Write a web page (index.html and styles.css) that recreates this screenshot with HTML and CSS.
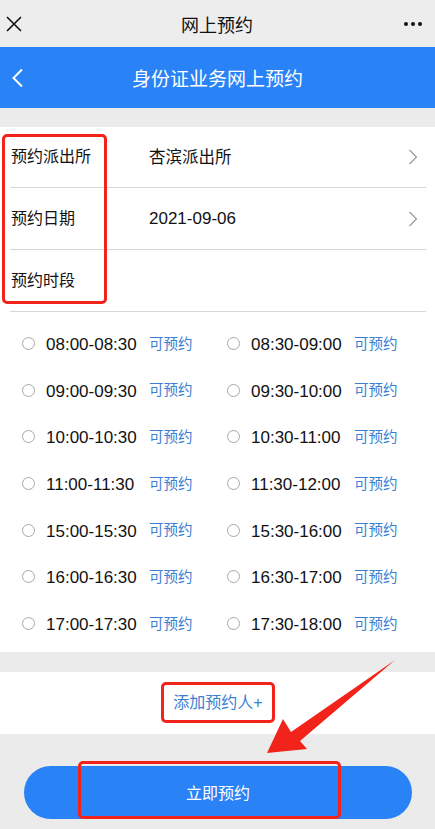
FILE: index.html
```html
<!DOCTYPE html>
<html lang="zh-CN">
<head>
    <meta charset="UTF-8">
    <meta name="viewport" content="width=device-width, initial-scale=1.0">
    <title>网上预约</title>
    <link rel="stylesheet" href="styles.css">
</head>
<body>
    <div class="topbar">
        <svg class="close" width="16" height="16" viewBox="0 0 16 16">
            <path d="M1 1L15 15M15 1L1 15" stroke="#111" stroke-width="1.6" fill="none"/>
        </svg>
        <span class="topbar-title">网上预约</span>
        <span class="dots"><i></i><i></i><i></i></span>
    </div>

    <header class="header">
        <svg class="back" width="13" height="20" viewBox="0 0 13 20">
            <path d="M11 1.5L2.5 10L11 18.5" stroke="#fff" stroke-width="2" fill="none"/>
        </svg>
        <h1>身份证业务网上预约</h1>
    </header>

    <section class="form">
        <div class="row">
            <span class="label">预约派出所</span>
            <span class="value">杏滨派出所</span>
            <svg class="arrow" width="10" height="16" viewBox="0 0 10 16">
                <path d="M1.5 1L8.5 8L1.5 15" stroke="#999" stroke-width="1.2" fill="none"/>
            </svg>
        </div>
        <div class="row">
            <span class="label">预约日期</span>
            <span class="value num">2021-09-06</span>
            <svg class="arrow" width="10" height="16" viewBox="0 0 10 16">
                <path d="M1.5 1L8.5 8L1.5 15" stroke="#999" stroke-width="1.2" fill="none"/>
            </svg>
        </div>
        <div class="row">
            <span class="label">预约时段</span>
        </div>
        <div class="mark mark-labels"></div>

        <div class="slots">
            <label class="slot"><i class="radio"></i><span class="time">08:00-08:30</span><span class="state">可预约</span></label>
            <label class="slot"><i class="radio"></i><span class="time">08:30-09:00</span><span class="state">可预约</span></label>
            <label class="slot"><i class="radio"></i><span class="time">09:00-09:30</span><span class="state">可预约</span></label>
            <label class="slot"><i class="radio"></i><span class="time">09:30-10:00</span><span class="state">可预约</span></label>
            <label class="slot"><i class="radio"></i><span class="time">10:00-10:30</span><span class="state">可预约</span></label>
            <label class="slot"><i class="radio"></i><span class="time">10:30-11:00</span><span class="state">可预约</span></label>
            <label class="slot"><i class="radio"></i><span class="time">11:00-11:30</span><span class="state">可预约</span></label>
            <label class="slot"><i class="radio"></i><span class="time">11:30-12:00</span><span class="state">可预约</span></label>
            <label class="slot"><i class="radio"></i><span class="time">15:00-15:30</span><span class="state">可预约</span></label>
            <label class="slot"><i class="radio"></i><span class="time">15:30-16:00</span><span class="state">可预约</span></label>
            <label class="slot"><i class="radio"></i><span class="time">16:00-16:30</span><span class="state">可预约</span></label>
            <label class="slot"><i class="radio"></i><span class="time">16:30-17:00</span><span class="state">可预约</span></label>
            <label class="slot"><i class="radio"></i><span class="time">17:00-17:30</span><span class="state">可预约</span></label>
            <label class="slot"><i class="radio"></i><span class="time">17:30-18:00</span><span class="state">可预约</span></label>
        </div>
    </section>

    <section class="add">
        <span class="add-link">添加预约人+</span>
    </section>

    <div class="submit-wrap">
        <button class="submit">立即预约<span class="mark mark-button"></span></button>
    </div>

    <!-- annotation arrow -->
    <svg class="pointer" width="435" height="829" viewBox="0 0 435 829">
        <polygon points="267,753 283,719 291,732 395,660 300,741 307,749" fill="#f2231b"/>
    </svg>
</body>
</html>
```

FILE: styles.css
```css
body {
    margin: 0;
    width: 435px;
    min-height: 829px;
    background: #ebebeb;
    font-family: "Liberation Sans", "Noto Sans CJK SC", sans-serif;
    color: #111;
    position: relative;
    overflow: hidden;
}
.topbar {
    height: 47px;
    display: flex;
    align-items: center;
    justify-content: space-between;
    padding: 0 13px 0 6px;
    background: #ededed;
}
.topbar-title {
    font-size: 18px;
    margin-left: 8px;
}
.dots {
    display: flex;
    gap: 3px;
}
.dots i {
    width: 4px;
    height: 4px;
    border-radius: 50%;
    background: #111;
}
.header {
    height: 61px;
    background: #2a82f7;
    display: flex;
    align-items: center;
    position: relative;
}
.back {
    margin-left: 11px;
}
.header h1 {
    position: absolute;
    left: 0;
    right: 0;
    margin: 0;
    text-align: center;
    font-size: 19px;
    font-weight: normal;
    color: #fff;
}
.form {
    margin-top: 19px;
    background: #fff;
    position: relative;
    padding-bottom: 4px;
}
.row {
    height: 61px;
    margin: 0 9px 0 10px;
    border-bottom: 1px solid #d6d6d6;
    display: flex;
    align-items: center;
    font-size: 16px;
    line-height: 1;
}
.row:first-child {
    height: 60px;
}
.label {
    width: 138px;
    padding-left: 1px;
}
.value {
    flex: 1;
    font-size: 16.5px;
}
.value.num {
    font-size: 17px;
}
.arrow {
    margin-right: 8px;
}
.mark {
    position: absolute;
    border: 3px solid #f2231b;
    border-radius: 5px;
    box-sizing: border-box;
}
.mark-labels {
    top: 7px;
    left: 2px;
    width: 105px;
    height: 170px;
}
.slots {
    display: grid;
    grid-template-columns: 205px 205px;
    grid-auto-rows: 46.7px;
    padding: 9px 0 0 22px;
}
.slot {
    display: flex;
    align-items: center;
    line-height: 1;
}
.radio {
    width: 11px;
    height: 11px;
    border: 1px solid #a8a8a8;
    border-radius: 50%;
    margin-top: -2px;
}
.time {
    font-size: 17px;
    margin-left: 11px;
    width: 103px;
}
.state {
    font-size: 14.5px;
    color: #3a7fd2;
    margin-top: -1px;
}
.add {
    margin-top: 20px;
    height: 62px;
    background: #fff;
    display: flex;
    align-items: center;
    justify-content: center;
}
.add-link {
    display: inline-block;
    border: 3px solid #f2231b;
    border-radius: 5px;
    padding: 6px 9px 5px;
    margin-left: 1px;
    font-size: 16px;
    line-height: 24px;
    color: #3a7fd2;
}
.submit-wrap {
    padding: 32px 23px 0 24px;
}
.submit {
    position: relative;
    width: 100%;
    height: 53px;
    border: none;
    border-radius: 27px;
    background: #2a82f7;
    color: #fff;
    font-family: inherit;
    font-size: 16px;
    padding: 0;
}
.mark-button {
    top: -5px;
    left: 54px;
    width: 263px;
    height: 58px;
}
.pointer {
    position: absolute;
    top: 0;
    left: 0;
    pointer-events: none;
}
```
